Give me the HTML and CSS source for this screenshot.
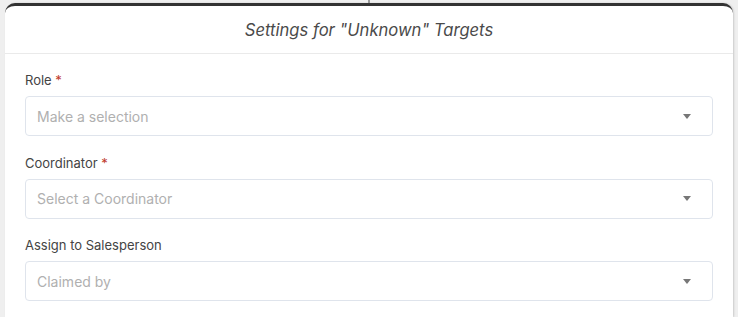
FILE: index.html
```html
<!DOCTYPE html>
<html lang="en">
  <head>
    <meta charset="UTF-8" />
    <meta name="viewport" content="width=device-width, initial-scale=1.0" />
    <title>Settings for "Unknown" Targets</title>
    <link rel="stylesheet" href="styles.css">
  </head>
  <body>
    <div class="backdrop"></div>
    <div class="modal">
      <div class="modal-header">Settings for "Unknown" Targets</div>
      <form class="modal-body">
        <div class="field">
          <label>Role <span class="req">*</span></label>
          <div class="select">
            <span class="placeholder">Make a selection</span>
            <span class="caret"></span>
          </div>
        </div>
        <div class="field">
          <label>Coordinator <span class="req">*</span></label>
          <div class="select">
            <span class="placeholder">Select a Coordinator</span>
            <span class="caret"></span>
          </div>
        </div>
        <div class="field">
          <label>Assign to Salesperson</label>
          <div class="select">
            <span class="placeholder">Claimed by</span>
            <span class="caret"></span>
          </div>
        </div>
      </form>
    </div>
  </body>
</html>
```

FILE: styles.css
```css
* {
  box-sizing: border-box;
}
html,
body {
  margin: 0;
  height: 100%;
  overflow: hidden;
}
body {
  background-color: #efefef;
  font-family: Inter, "Noto Sans", sans-serif;
  color: #444;
}
.backdrop {
  height: 3px;
  display: flex;
  justify-content: center;
}
.backdrop::after {
  content: "";
  width: 2px;
  background-color: #999;
}
.modal {
  margin: 0 5px;
  background-color: #fff;
  border-top: 3px solid #333;
  border-radius: 10px 10px 0 0;
  box-shadow: 1px 0 2px rgb(0 0 0 / 15%);
  height: calc(100% - 3px);
  overflow: hidden;
}
.modal-header {
  height: 48px;
  border-bottom: 1px solid #eaeaea;
  display: flex;
  align-items: center;
  justify-content: center;
  font-size: 16.6px;
  font-style: italic;
  color: #4a4a4a;
}
.modal-body {
  padding: 18px 20px 0 20px;
  display: flex;
  flex-direction: column;
  gap: 18.5px;
}
.field label {
  display: block;
  font-size: 13px;
  line-height: 16px;
  margin-bottom: 8px;
  color: #444;
}
.field .req {
  color: #c0392b;
}
.select {
  height: 40px;
  border: 1px solid #dfe4ec;
  border-radius: 4px;
  display: flex;
  align-items: center;
  justify-content: space-between;
  padding: 0 21px 0 11px;
}
.placeholder {
  font-size: 14px;
  color: #b0b0b0;
}
.caret {
  width: 0;
  height: 0;
  border-left: 4px solid transparent;
  border-right: 4px solid transparent;
  border-top: 5px solid #777;
}
```
